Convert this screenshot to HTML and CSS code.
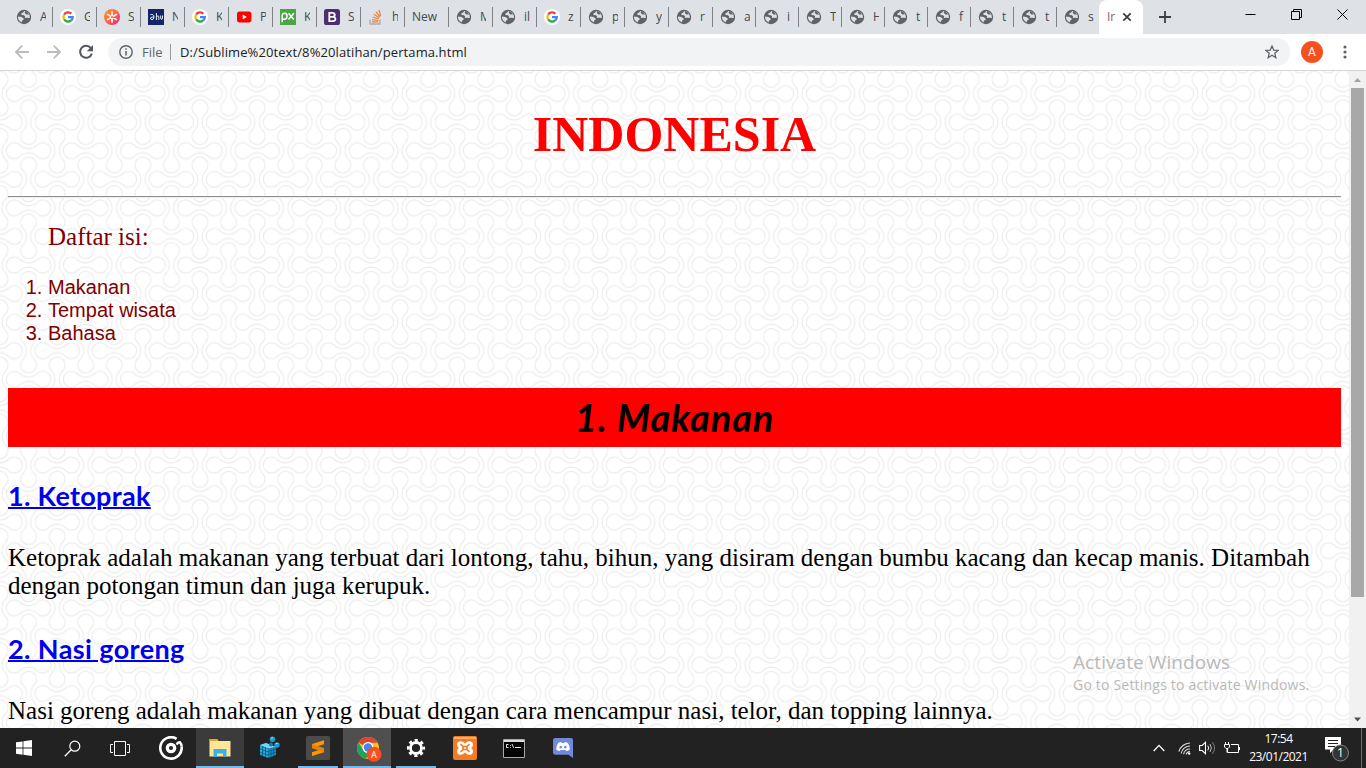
FILE: index.html
```html
<!DOCTYPE html>
<html lang="id">
<head>
<meta charset="utf-8">
<title>Indonesia</title>
<link rel="stylesheet" href="styles.css">
</head>
<body>
<svg class="defs" width="0" height="0">
  <symbol id="globe" viewBox="0 0 16 16"><circle cx="8" cy="8" r="7.2" fill="#5f6368"/><path d="M8.3 1.9 7.2 3.6 5.3 4.4 5.5 6 8 6.3 9.2 7.5 8.7 9 10.8 8.8 13.9 8.9A6.1 6.1 0 0 0 8.3 1.9ZM2 7.6 5.5 8 7.6 9.4 7.5 11 6 11.4 5.7 13.4A6 6 0 0 1 2 7.6Z" fill="#dee1e6"/><path d="M9 2 8.8 4 10.5 5.4 13 5.4A6 6 0 0 0 9 2Z" fill="#5f6368"/></symbol>
  <symbol id="google" viewBox="0 0 16 16"><circle cx="8" cy="8" r="8" fill="#fff"/><g fill="none" stroke-width="2.3"><path d="M4.1 5.6A4.8 4.8 0 0 1 11.4 4.7" stroke="#ea4335"/><path d="M4.1 10.4A4.8 4.8 0 0 1 4.1 5.6" stroke="#fbbc05"/><path d="M11.1 11.5A4.8 4.8 0 0 1 4.1 10.4" stroke="#34a853"/><path d="M8 8.1H12.7A4.8 4.8 0 0 1 11.1 11.5" stroke="#4285f4"/></g></symbol>
</svg>
<div class="screen">
  <header class="tabs">
    <div class="tab w44"><svg><use href="#globe"/></svg><span>A</span></div>
    <div class="tab w44"><svg><use href="#google"/></svg><span>G</span></div>
    <div class="tab w44"><svg viewBox="0 0 16 16"><defs><linearGradient id="sun" x1="0" y1="0" x2="1" y2="1"><stop offset="0" stop-color="#ff9f1c"/><stop offset=".6" stop-color="#fb5750"/><stop offset="1" stop-color="#e4168a"/></linearGradient></defs><circle cx="8" cy="8" r="8" fill="url(#sun)"/><g stroke="#ffe9df" stroke-width="1.9" stroke-linecap="round"><path d="M8 3V13M3.7 5.5 12.3 10.5M3.7 10.5 12.3 5.5"/></g><circle cx="8" cy="8" r="1" fill="#fb6a50"/></svg><span>S</span></div>
    <div class="tab w44"><svg viewBox="0 0 16 16"><path fill="#122568" d="M0 0H16V16H0Z"/><path d="M2.3 5.7Q5.8 4.6 6 8Q5.8 10.7 4 10.7Q2 10.3 2.6 8.8Q4 7.6 5.8 8.2M8.4 4V11M8.4 8Q10.8 5.8 10.8 8V11M12.7 6.5V9.7Q14.3 11.4 14.5 9V6.5" fill="none" stroke="#fff" stroke-width=".9"/></svg><span>N</span></div>
    <div class="tab w44"><svg><use href="#google"/></svg><span>K</span></div>
    <div class="tab w44"><svg viewBox="0 0 16 16"><rect x="1" y="2.6" width="14.4" height="10.8" rx="2.6" fill="#f00"/><path d="M6.7 5.6V10.4L10.8 8Z" fill="#fff"/></svg><span>P</span></div>
    <div class="tab w44"><svg viewBox="0 0 16 16"><path fill="#4aa644" d="M0 0H16V16H0Z"/><path d="M2.2 13.2V6.5Q2.2 4.2 4.5 4.2Q7.2 4.3 7.1 7.3Q7 10.2 4.2 10.2H2.3M8.5 4.2 13.8 10.6M13.8 4.2 8.5 10.6" fill="none" stroke="#fff" stroke-width="1.5"/></svg><span>K</span></div>
    <div class="tab w44"><svg viewBox="0 0 16 16"><rect width="16" height="16" rx="2.6" fill="#4b2e6e"/><path d="M5.3 3.8V12.2H8.9Q11.5 12 11.4 9.9Q11.3 7.9 8.9 7.8H5.3H8.7Q10.8 7.5 10.8 5.7Q10.6 3.9 8.7 3.8Z" fill="none" stroke="#fff" stroke-width="1.8"/></svg><span>S</span></div>
    <div class="tab w44"><svg viewBox="0 0 16 16"><path d="M2 10.5V15H12V10.5" fill="none" stroke="#a9adb1" stroke-width="1.3"/><path d="M3.9 12.8H10.3M4 10.6 10.4 11.5M4.6 8 10.7 10M5.8 5.3 11.2 8.8M8 2.9 12 7.9M11 1 12.7 7" stroke="#ef8236" stroke-width="1.2"/></svg><span>h</span></div>
    <div class="tab w44 plain"><span>New</span></div>
    <div class="tab w44"><svg><use href="#globe"/></svg><span>M</span></div>
    <div class="tab w44"><svg><use href="#globe"/></svg><span>il</span></div>
    <div class="tab w44"><svg><use href="#google"/></svg><span>z</span></div>
    <div class="tab w44"><svg><use href="#globe"/></svg><span>p</span></div>
    <div class="tab w44"><svg><use href="#globe"/></svg><span>y</span></div>
    <div class="tab w44"><svg><use href="#globe"/></svg><span>r</span></div>
    <div class="tab w43"><svg><use href="#globe"/></svg><span>a</span></div>
    <div class="tab w43"><svg><use href="#globe"/></svg><span>i</span></div>
    <div class="tab w43"><svg><use href="#globe"/></svg><span>T</span></div>
    <div class="tab w43"><svg><use href="#globe"/></svg><span>H</span></div>
    <div class="tab w43"><svg><use href="#globe"/></svg><span>t</span></div>
    <div class="tab w43"><svg><use href="#globe"/></svg><span>f</span></div>
    <div class="tab w43"><svg><use href="#globe"/></svg><span>t</span></div>
    <div class="tab w43"><svg><use href="#globe"/></svg><span>t</span></div>
    <div class="tab w43 last"><svg><use href="#globe"/></svg><span>s</span></div>
    <div class="active"><span>Ir</span><svg width="10" height="10" viewBox="0 0 10 10"><path d="M1.3 1.3 8.7 8.7M8.7 1.3 1.3 8.7" stroke="#3c4043" stroke-width="1.8"/></svg></div>
    <svg class="plus" width="12" height="12" viewBox="0 0 12 12"><path d="M6 0V12M0 6H12" stroke="#3c4043" stroke-width="1.8"/></svg>
    <div class="winbtns">
      <svg width="11" height="11" viewBox="0 0 11 11"><path d="M.5 5.5H10.5" stroke="#000"/></svg>
      <svg width="11" height="11" viewBox="0 0 11 11"><path d="M.5 2.5H8.5V10.5H.5ZM2.5 2.5V.5H10.5V8.5H8.5" fill="none" stroke="#000"/></svg>
      <svg width="11" height="11" viewBox="0 0 11 11"><path d="M.5.5 10.5 10.5M10.5.5.5 10.5" stroke="#000"/></svg>
    </div>
  </header>
  <nav class="toolbar">
    <svg class="back" width="16" height="16" viewBox="0 0 16 16"><path d="M15 8H2M8.3 1.6 1.9 8 8.3 14.4" fill="none" stroke="#babcbe" stroke-width="1.8"/></svg>
    <svg class="fwd" width="16" height="16" viewBox="0 0 16 16"><path d="M1 8H14M7.7 1.6 14.1 8 7.7 14.4" fill="none" stroke="#babcbe" stroke-width="1.8"/></svg>
    <svg class="reload" width="16" height="16" viewBox="0 0 16 16"><path d="M12.8 4A6 6 0 1 0 13.8 9.6" fill="none" stroke="#54585d" stroke-width="2"/><path d="M15 1V7.2H8.8Z" fill="#54585d"/></svg>
    <div class="omnibox">
      <svg width="14" height="14" viewBox="0 0 14 14"><circle cx="7" cy="7" r="6.2" fill="none" stroke="#5f6368" stroke-width="1.4"/><path d="M7 6V10.6M7 3.3V4.8" stroke="#5f6368" stroke-width="1.5"/></svg>
      <span class="file">File</span><i></i><span class="url">D:/Sublime%20text/8%20latihan/pertama.html</span>
      <svg class="star" width="14" height="14" viewBox="0 0 14 14"><path d="M7 1 8.7 5.1 13.1 5.4 9.8 8.3 10.8 12.7 7 10.3 3.2 12.7 4.2 8.3.9 5.4 5.3 5.1Z" fill="none" stroke="#5f6368" stroke-width="1.3"/></svg>
    </div>
    <div class="avatar">A</div>
    <svg class="dots" width="4" height="14" viewBox="0 0 4 14"><g fill="#5f6368"><circle cx="2" cy="2" r="1.6"/><circle cx="2" cy="7" r="1.6"/><circle cx="2" cy="12" r="1.6"/></g></svg>
  </nav>
  <div class="view">
    <main class="page">
      <h1>INDONESIA</h1>
      <hr>
      <p class="toc-title">Daftar isi:</p>
      <ol class="toc"><li>Makanan</li><li>Tempat wisata</li><li>Bahasa</li></ol>
      <h2 class="banner"><span>1. Makanan</span></h2>
      <h3><a class="ketoprak">1. Ketoprak</a></h3>
      <p class="text">Ketoprak adalah makanan yang terbuat dari lontong, tahu, bihun, yang disiram dengan bumbu kacang dan kecap manis. Ditambah<br>dengan potongan timun dan juga kerupuk.</p>
      <h3><a class="nasi">2. Nasi goreng</a></h3>
      <p class="text">Nasi goreng adalah makanan yang dibuat dengan cara mencampur nasi, telor, dan topping lainnya.</p>
    </main>
    <div class="scroll">
      <svg width="17" height="17" viewBox="0 0 17 17"><path d="M5 11 8.5 7 12 11Z" fill="#a3a3a3"/></svg>
      <div class="thumb"></div>
      <svg class="down" width="17" height="17" viewBox="0 0 17 17"><path d="M5 6.5 8.5 10.5 12 6.5Z" fill="#505050"/></svg>
    </div>
    <div class="activate"><div class="act1">Activate Windows</div><div class="act2">Go to Settings to activate Windows.</div></div>
  </div>
  <footer class="taskbar">
    <div class="slot"><svg width="16" height="16" viewBox="0 0 16 16"><path d="M0 2.3 6.6 1.4V7.6H0ZM7.4 1.3 16 0V7.6H7.4ZM0 8.4H6.6V14.7L0 13.8ZM7.4 8.4H16V16L7.4 14.8Z" fill="#fff"/></svg></div>
    <div class="slot"><svg width="17" height="17" viewBox="0 0 17 17"><circle cx="10.8" cy="6.2" r="5" fill="none" stroke="#fff" stroke-width="1.2"/><path d="M7.2 9.8.8 16.2" stroke="#fff" stroke-width="1.3"/></svg></div>
    <div class="slot"><svg width="20" height="15" viewBox="0 0 20 15"><path d="M4.5.5H15.5V14.5H4.5ZM3 3.5H.5V11.5H3M17 3.5H19.5V11.5H17" fill="none" stroke="#fff"/></svg></div>
    <div class="slot gap"><svg width="24" height="24" viewBox="0 0 24 24"><path d="M17.6 2.8A10.7 10.7 0 1 0 22.6 10.5" fill="none" stroke="#fff" stroke-width="2.6"/><circle cx="12" cy="12" r="3.7" fill="none" stroke="#fff" stroke-width="3.3"/><path d="M17.8 8.6Q18.6 6.3 21 6.3Q22.4 7.6 22.6 10.5" stroke="#fff" stroke-width="2.4" fill="none"/></svg></div>
    <div class="slot gap1 explorer"><svg width="24" height="24" viewBox="0 0 24 24"><path d="M1.5 3H9L10.5 5H22.5V20.5H1.5Z" fill="#ffe696"/><path d="M1.5 3H9L10.5 5H1.5Z" fill="#e9a91f"/><path d="M5.5 21V13H18.5V21H15V17.5H9V21Z" fill="#38b1e7"/></svg></div>
    <div class="slot gap1"><svg width="24" height="24" viewBox="0 0 24 24"><path d="M3 9 9 7 19 11V19L11 22 3 19Z" fill="#178fc2"/><path d="M3 9 9 7 19 11 11 12.5Z" fill="#74d4f4"/><path d="M11 12V22M3 12.4 11 15.5 19 13M3 15.7 11 18.8 19 16M5.8 10V20.2M8.4 11V21M14 12V21M16.7 11V20" stroke="#075a8b" stroke-width=".8" fill="none"/><path d="M4 10.7V18M7 12V20M10 13V21" stroke="#5cc9ed" stroke-width="1" stroke-dasharray="2 1.3"/><circle cx="15.5" cy="3.3" r="2.8" fill="#2499cf"/><circle cx="20" cy="9" r="2.7" fill="#2499cf"/><circle cx="14" cy="8.5" r="2" fill="#147bac"/><path d="M14 2.2 16 1.8M18.8 7.7 20.6 7.4" stroke="#a3e4ff"/></svg></div>
    <div class="slot gap1 open"><svg width="24" height="24" viewBox="0 0 24 24"><rect width="24" height="24" rx="1.5" fill="#4b4b4b"/><path d="M18 4.2 6 8V12L13 14 6 16.2V20L18 16.3V12.2L11.3 10.3 18 8.2Z" fill="#ff9800"/><path d="M6 8V12L18 16.3V12.2L10 9.6Z" fill="#f08000"/></svg></div>
    <div class="slot gap1 chrome"><svg width="26" height="26" viewBox="0 0 26 26"><circle cx="12" cy="12" r="11" fill="#fbc116"/><path d="M12 12 2.4 6.6A11 11 0 0 1 21.6 6.7H12Z" fill="#db4437"/><path d="M2.4 6.6 8 15 13 17 10 22.8A11 11 0 0 1 2.4 6.6Z" fill="#1da260"/><circle cx="12" cy="11.5" r="5.5" fill="#fff"/><circle cx="12" cy="11.5" r="4.2" fill="#4285f4"/><circle cx="18" cy="18.3" r="7.5" fill="#f4511e"/><text x="18" y="21.6" text-anchor="middle" class="badge-a">A</text></svg></div>
    <div class="slot gap1 open"><svg width="20" height="20" viewBox="0 0 20 20"><circle cx="10" cy="10" r="5.5" fill="none" stroke="#fff" stroke-width="2.8"/><circle cx="10" cy="10" r="7.8" fill="none" stroke="#fff" stroke-width="2.6" stroke-dasharray="3.2 2.926" stroke-dashoffset="1.6"/></svg></div>
    <div class="slot gap1"><svg width="24" height="24" viewBox="0 0 24 24"><rect width="24" height="24" rx="2" fill="#f47b20"/><path d="M1 1H23V3H1Z" fill="#ffae71"/><path d="M8.2 5.2Q4 5 4 8.8Q4 11 6 12Q4 13 4 15.2Q4 19 8.2 18.8Q10.5 18.5 12 16.6Q13.5 18.5 15.8 18.8Q20 19 20 15.2Q20 13 18 12Q20 11 20 8.8Q20 5 15.8 5.2Q13.5 5.5 12 7.4Q10.5 5.5 8.2 5.2Z" fill="#fff"/><path d="M8 8.5 10 10.5H14L16 8.5M8 15.5 10 13.5H14L16 15.5M10 10.5V13.5M14 10.5V13.5" stroke="#f47b20" stroke-width="1.7" fill="none" stroke-linecap="round"/></svg></div>
    <div class="slot gap1"><svg width="22" height="19" viewBox="0 0 22 19"><path d="M.5.5H21.5V18.5H.5Z" fill="#050505" stroke="#aaa"/><path d="M1 1H21V3H1Z" fill="#ddd"/><path d="M5.5 5.5H3.5V8.5H5.5M7.5 6V6.8M7.5 8V8.8M9 5 10.7 8.8M12 8.5H18" fill="none" stroke="#fff" stroke-width=".9"/></svg></div>
    <div class="slot gap1"><svg width="20" height="20" viewBox="0 0 20 20"><path d="M2.3 0H17.7Q20 0 20 2.2V20L15.5 16.8H2.3Q0 16.8 0 14.5V2.2Q0 0 2.3 0Z" fill="#7289da"/><path d="M3.2 11.5Q3.3 7.5 5 5.2Q6.8 4.1 8.2 4L8.7 4.9H11.3L11.8 4Q13.2 4.1 15 5.2Q16.7 7.5 16.8 11.5Q15 13 13.3 13L12.5 12H7.5L6.7 13Q5 13 3.2 11.5Z" fill="#fff"/><ellipse cx="7.7" cy="9.2" rx="1.2" ry="1.4" fill="#7289da"/><ellipse cx="12.3" cy="9.2" rx="1.2" ry="1.4" fill="#7289da"/></svg></div>
    <div class="tray">
      <svg width="12" height="8" viewBox="0 0 12 8"><path d="M.7 7 6 1.4 11.3 7" fill="none" stroke="#fff" stroke-width="1.3"/></svg>
      <svg class="wifi" width="13" height="13" viewBox="0 0 13 13"><g fill="none" stroke="#ddd" stroke-width="1.1"><path d="M.8 9.7A12 12 0 0 1 12 1"/><path d="M3.2 11.5A9 9 0 0 1 12 4"/><path d="M5.6 12.2A6 6 0 0 1 12 7"/><path d="M8.2 12.4A4 4 0 0 1 12 9.6"/></g><circle cx="11.2" cy="11.6" r="1.2" fill="#fff"/></svg>
      <svg class="vol" width="17" height="14" viewBox="0 0 17 14"><path d="M.6 4.5H3.2L6.5 1.3V12.7L3.2 9.5H.6Z" fill="none" stroke="#fff" stroke-width="1.1"/><path d="M8.8 4.7Q10.5 7 8.8 9.3" fill="none" stroke="#fff"/><path d="M11 3Q13.8 7 11 11" fill="none" stroke="#bbb"/><path d="M13.3 1Q17.8 7 13.3 13" fill="none" stroke="#777"/></svg>
      <svg class="bat" width="16" height="12" viewBox="0 0 16 12"><path d="M7 2.5H14.5V10.5H3.5V7M15.5 5V8" fill="none" stroke="#fff"/><path d="M1.5 0V2M4.5 0V2M.5 2.5H5.5V5L4 6.5H2L.5 5ZM3 6.5V10.5" fill="none" stroke="#fff"/></svg>
      <div class="clock"><div>17:54</div><div class="date">23/01/2021</div></div>
      <svg class="note" width="25" height="26" viewBox="0 0 25 26"><path d="M0 0H16V12.5H9L5 16V12.5H0Z" fill="#fff"/><path d="M3 3.5H13M3 6.5H13M3 9.5H10" stroke="#222"/><circle cx="15.5" cy="16" r="8" fill="#343434" stroke="#858585"/><text x="15.5" y="20.3" text-anchor="middle" class="count">1</text></svg>
      <i class="desk"></i>
    </div>
  </footer>
</div>
</body>
</html>
```

FILE: styles.css
```css
* { box-sizing: border-box; }
body { margin: 0; overflow: hidden; background: #fff; }
svg { display: block; flex: none; }
.defs { position: absolute; }
.screen { width: 1366px; height: 768px; display: flex; flex-direction: column; overflow: hidden; }

.tabs { height: 34px; background: #dee1e6; display: flex; padding-left: 9px; font: 12px/16px "Open Sans", sans-serif; color: #45494d; }
.tab { height: 20px; margin-top: 7px; border-right: 1px solid #808387; display: flex; align-items: center; padding-left: 7px; overflow: hidden; flex: none; }
.tab svg { width: 16px; height: 16px; }
.tab span { margin-left: 8px; width: 6px; overflow: hidden; white-space: nowrap; }
.tab.plain span { margin-left: 0; width: 30px; }
.w44 { width: 44px; }
.w43 { width: 43px; }
.tab.last { border-right: 0; width: 42px; }
.active { width: 44px; height: 34px; background: #fff; border-radius: 8px 8px 0 0; display: flex; align-items: center; padding-left: 8px; flex: none; }
.active span { width: 8px; overflow: hidden; color: #85606a; }
.active svg { margin-left: 7px; }
.plus { margin: 11px 0 0 16px; }
.winbtns { margin-left: auto; margin-right: 18px; padding-top: 9px; display: flex; gap: 35px; }

.toolbar { height: 37px; background: #fff; border-bottom: 1px solid #d5d6d9; display: flex; align-items: center; padding-left: 14px; font: 13px/18px "Open Sans", sans-serif; }
.fwd { margin-left: 16px; }
.reload { margin-left: 16px; }
.omnibox { margin-left: 14px; width: 1182px; height: 28px; border-radius: 14px; background: #f1f3f4; display: flex; align-items: center; padding: 0 11px; }
.file { margin-left: 9px; width: 21px; color: #5f6368; }
.omnibox i { width: 1px; height: 16px; background: #9b9ea1; margin: 0 9px 0 7px; }
.url { color: #202124; white-space: nowrap; letter-spacing: .1px; }
.star { margin-left: auto; }
.avatar { width: 22px; height: 22px; border-radius: 50%; margin-left: 11px; background: #f4511e; color: #fff; font: 12px/22px Roboto, sans-serif; text-align: center; }
.dots { margin-left: 20px; }

.view { flex: 1; min-height: 0; display: flex; position: relative; overflow: hidden; }
.page {
  width: 1349px; padding: 35px 8px 0; overflow: hidden; background-color: #fff;
  background-image: url("data:image/svg+xml,%3Csvg xmlns='http://www.w3.org/2000/svg' width='400' height='400' viewBox='0 0 400 400'%3E%3Cdefs%3E%3Cpattern id='p' width='57.142857' height='57.142857' patternUnits='userSpaceOnUse'%3E%3Cg fill='none' stroke='%23ececec' stroke-width='1.1'%3E%3Cg id='a'%3E%3Cpath id='d' d='M-8.63-5.66A12.2 12.2 0 0 0 8.63-5.66A8 8 0 1 1 8.63 5.66A12.2 12.2 0 0 0-8.63 5.66A8 8 0 1 1-8.63-5.66Z' transform='translate(28.57 28.57)'/%3E%3C/g%3E%3Cuse href='%23d' x='28.57' y='28.57'/%3E%3Cuse href='%23d' x='-28.57' y='28.57'/%3E%3Cuse href='%23d' x='28.57' y='-28.57'/%3E%3Cuse href='%23d' x='-28.57' y='-28.57'/%3E%3Cg transform='rotate(90 28.57 28.57)'%3E%3Cuse href='%23d' x='28.57'/%3E%3Cuse href='%23d' x='-28.57'/%3E%3Cuse href='%23d' y='28.57'/%3E%3Cuse href='%23d' y='-28.57'/%3E%3C/g%3E%3C/g%3E%3C/pattern%3E%3C/defs%3E%3Crect width='400' height='400' fill='url(%23p)'/%3E%3C/svg%3E");
  background-size: 400px 400px; background-position: 0 -6px;
  font-family: "Liberation Serif", "Times New Roman", serif; color: #000;
}
h1 { margin: 0; height: 57px; font-size: 50px; line-height: 57px; text-align: center; color: #f00; }
hr { margin: 33px 0 0; height: 2px; border: 0; border-top: 1px solid #8f8f8f; border-bottom: 1px solid #ececec; }
.toc-title { margin: 25px 0 0 40px; font-size: 25px; line-height: 28px; color: #800000; }
.toc { margin: 25px 0 0; padding-left: 40px; font: 20px/23px "Liberation Sans", Arial, sans-serif; color: #800000; }
.banner { margin: 43px 0 0; height: 59px; background: #f00; text-align: center; font: italic bold 38px/59px Lato, sans-serif; letter-spacing: .85px; }
h3 { margin: 32px 0 0; height: 34px; font: bold 27px/34px Lato, sans-serif; letter-spacing: .32px; color: #00e; }
h3 a { text-decoration: underline; text-decoration-thickness: 2px; }
.nasi { letter-spacing: .4px; }
.text { margin: 31px 0 0; font-size: 25px; line-height: 28px; white-space: nowrap; }

.scroll { width: 17px; background: #f1f1f1; display: flex; flex-direction: column; }
.thumb { width: 13px; height: 509px; margin-left: 2px; background: #a8a8a8; }
.down { margin-top: auto; }
.activate { position: absolute; left: 1073px; top: 579px; color: #b9b9b9; font-family: "Open Sans", sans-serif; white-space: nowrap; }
.act1 { font-size: 19px; line-height: 25px; letter-spacing: .08px; }
.act2 { font-size: 14px; line-height: 20px; letter-spacing: .2px; }

.taskbar { height: 40px; background: #222; display: flex; color: #fff; }
.slot { width: 48px; height: 40px; display: flex; align-items: center; justify-content: center; position: relative; flex: none; }
.gap { margin-left: 3px; }
.gap1 { margin-left: 1px; }
.explorer { background: #3b3b3b; border-bottom: 2px solid #76b9ed; padding-top: 2px; }
.chrome { background: #4f4f4f; border-bottom: 2px solid #76b9ed; padding: 4px 0 0 4px; }
.open::after { content: ""; position: absolute; left: 4px; bottom: 0; width: 40px; height: 2px; background: #76b9ed; }
.badge-a { font: 9px Roboto, sans-serif; fill: #fff; }
.tray { margin-left: auto; display: flex; align-items: center; font: 12px/18px "Open Sans", sans-serif; }
.wifi { margin-left: 13px; }
.vol { margin-left: 8px; }
.bat { margin-left: 8px; }
.clock { width: 77px; text-align: center; letter-spacing: -.5px; }
.note { margin: 3px 0 0 8px; }
.count { font: 12px "Open Sans", sans-serif; fill: #fff; }
.desk { width: 1px; height: 40px; background: #6a6a6a; margin: 0 4px 0 11px; }
```
